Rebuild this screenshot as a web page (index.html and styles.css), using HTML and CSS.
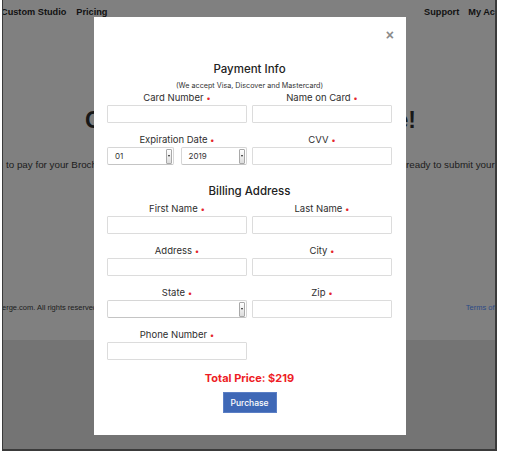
FILE: index.html
```html
<!DOCTYPE html>
<html lang="en">
<head>
<meta charset="utf-8">
<title>Payment</title>
<link rel="stylesheet" href="styles.css">
</head>
<body>
<div class="screen">
  <header class="nav">
    <div class="nav-left"><span class="nav-link first">Custom Studio</span><span class="nav-link">Pricing</span></div>
    <div class="nav-right"><span class="nav-link">Support</span><span class="nav-link">My Account</span></div>
  </header>
  <section class="hero">
    <h1 class="headline"><span>Get</span><span>Brochure!</span></h1>
    <p class="lede"><span class="lede-left">to pay for your Brochure order, fill in</span><span class="lede-mid"></span><span class="lede-right">ready to submit your brochure</span></p>
  </section>
  <footer class="footer">
    <span class="copy">© 2019 BrochureConcierge.com. All rights reserved.</span>
    <span class="terms">Terms of Use</span>
  </footer>

  <div class="modal">
    <span class="close">×</span>
    <h2 class="title">Payment Info</h2>
    <p class="sub">(We accept Visa, Discover and Mastercard)</p>
    <div class="row">
      <div class="group"><label class="label">Card Number <span class="req">•</span></label><div class="input"></div></div>
      <div class="group"><label class="label">Name on Card <span class="req">•</span></label><div class="input"></div></div>
    </div>
    <div class="row">
      <div class="group"><label class="label">Expiration Date <span class="req">•</span></label>
        <div class="pair">
          <div class="select"><span class="val">01</span><span class="arrow"><span class="tri"></span></span></div>
          <div class="select"><span class="val">2019</span><span class="arrow"><span class="tri"></span></span></div>
        </div>
      </div>
      <div class="group"><label class="label">CVV <span class="req">•</span></label><div class="input"></div></div>
    </div>
    <h2 class="title billing">Billing Address</h2>
    <div class="row">
      <div class="group"><label class="label">First Name <span class="req">•</span></label><div class="input"></div></div>
      <div class="group"><label class="label">Last Name <span class="req">•</span></label><div class="input"></div></div>
    </div>
    <div class="row">
      <div class="group"><label class="label">Address <span class="req">•</span></label><div class="input"></div></div>
      <div class="group"><label class="label">City <span class="req">•</span></label><div class="input"></div></div>
    </div>
    <div class="row">
      <div class="group"><label class="label">State <span class="req">•</span></label>
        <div class="select"><span class="val"></span><span class="arrow"><span class="tri"></span></span></div>
      </div>
      <div class="group"><label class="label">Zip <span class="req">•</span></label><div class="input"></div></div>
    </div>
    <div class="row">
      <div class="group"><label class="label">Phone Number <span class="req">•</span></label><div class="input"></div></div>
    </div>
    <p class="total">Total Price: $219</p>
    <div class="actions"><button class="btn">Purchase</button></div>
  </div>
</div>
</body>
</html>
```
FILE: styles.css
```css
* { box-sizing: border-box; }
html, body { margin: 0; padding: 0; background: #ffffff; }
body { font-family: "Liberation Sans", Arial, sans-serif; }

.screen {
  position: relative;
  margin-left: 2px;
  width: 495px;
  height: 451px;
  border-style: solid;
  border-color: #3a3a3a;
  border-width: 0 2px 2px 1px;
  background: #747474;
  overflow: hidden;
}

.nav {
  height: 20px;
  padding-top: 6px;
  background: #808080;
  display: flex;
  justify-content: space-between;
  font-size: 9.2px;
  line-height: 12px;
  font-weight: bold;
  color: #121212;
  white-space: nowrap;
}
.nav-left { margin-left: -2px; display: flex; gap: 10px; }
.nav-right { display: flex; gap: 9px; margin-right: -25px; }

.hero {
  height: 282px;
  background: #808080;
  padding-top: 86px;
  color: #181818;
}
.headline {
  margin: 0;
  font-family: "Liberation Sans", Arial, sans-serif;
  font-size: 23px;
  line-height: 28px;
  font-weight: bold;
  display: flex;
  justify-content: space-between;
  padding: 0 79px 0 82px;
  white-space: nowrap;
}
.lede {
  margin: 25px 0 0;
  font-size: 9.8px;
  line-height: 12px;
  display: grid;
  grid-template-columns: 91px 312px 1fr;
  white-space: nowrap;
  overflow: hidden;
  color: #1c1c1c;
}
.lede-left { padding-left: 3px; overflow: hidden; }
.lede-right { overflow: hidden; }

.footer {
  height: 38px;
  background: #808080;
  display: flex;
  justify-content: space-between;
  font-size: 7.5px;
  line-height: 10px;
  padding-top: 1px;
  white-space: nowrap;
  color: #1c1c1c;
}
.copy { margin-left: -77px; }
.terms { color: #2c4a86; margin-right: -15px; }

/* modal */
.modal {
  position: absolute;
  left: 91px;
  top: 17px;
  width: 312px;
  height: 418px;
  background: #ffffff;
  padding: 44px 14px 0 13px;
  font-family: "Inter", "Noto Sans", sans-serif;
  color: #333333;
}
.close {
  position: absolute;
  right: 12px;
  top: 10px;
  font-family: "Liberation Sans", Arial, sans-serif;
  font-size: 14px;
  font-weight: bold;
  color: #8a8a8a;
}
.title {
  margin: 0;
  text-align: center;
  font-size: 11.5px;
  line-height: 16px;
  font-weight: 500;
  color: #222222;
}
.billing { margin-top: 18px; margin-bottom: 4px; }
.sub {
  margin: 4px 0 1px;
  text-align: center;
  font-size: 7.2px;
  line-height: 10px;
  color: #333333;
}
.row {
  display: grid;
  grid-template-columns: 140px 140px;
  column-gap: 5px;
  margin-bottom: 11px;
}
.group { display: flex; flex-direction: column; }
.label {
  display: block;
  text-align: center;
  font-size: 9.5px;
  line-height: 12px;
  margin-bottom: 1px;
  color: #2e2e2e;
}
.req { color: #e5262d; font-size: 8px; }
.input {
  height: 18px;
  border: 1px solid #dcdcdc;
  border-radius: 1px;
  background: #fff;
}
.pair { display: flex; gap: 7px; }
.pair .select { flex: 1; }
.select {
  height: 18px;
  border: 1px solid #d6d6d6;
  border-bottom-color: #c4c4c4;
  border-radius: 2px;
  background: #fff;
  display: flex;
  align-items: center;
  padding: 0 1px 0 7px;
  font-size: 8px;
  color: #333;
}
.val { flex: 1; }
.arrow {
  width: 6px;
  height: 15px;
  border: 1px solid #a9a9a9;
  border-radius: 1px;
  background: linear-gradient(#ffffff, #dcdcdc);
  display: flex;
  align-items: center;
  justify-content: center;
}
.tri {
  width: 0;
  height: 0;
  border-left: 1.5px solid transparent;
  border-right: 1.5px solid transparent;
  border-top: 2px solid #222;
}
.total {
  margin: 0;
  text-align: center;
  font-size: 11px;
  line-height: 15px;
  font-weight: 700;
  color: #ee1c25;
}
.actions { display: flex; justify-content: center; margin-top: 6px; }
.btn {
  width: 54px;
  height: 21px;
  padding: 0;
  border: 1px solid #5b7fc5;
  background: #3f68b6;
  color: #ffffff;
  font-family: "Inter", "Noto Sans", sans-serif;
  font-size: 8.5px;
  font-weight: 500;
}
```
